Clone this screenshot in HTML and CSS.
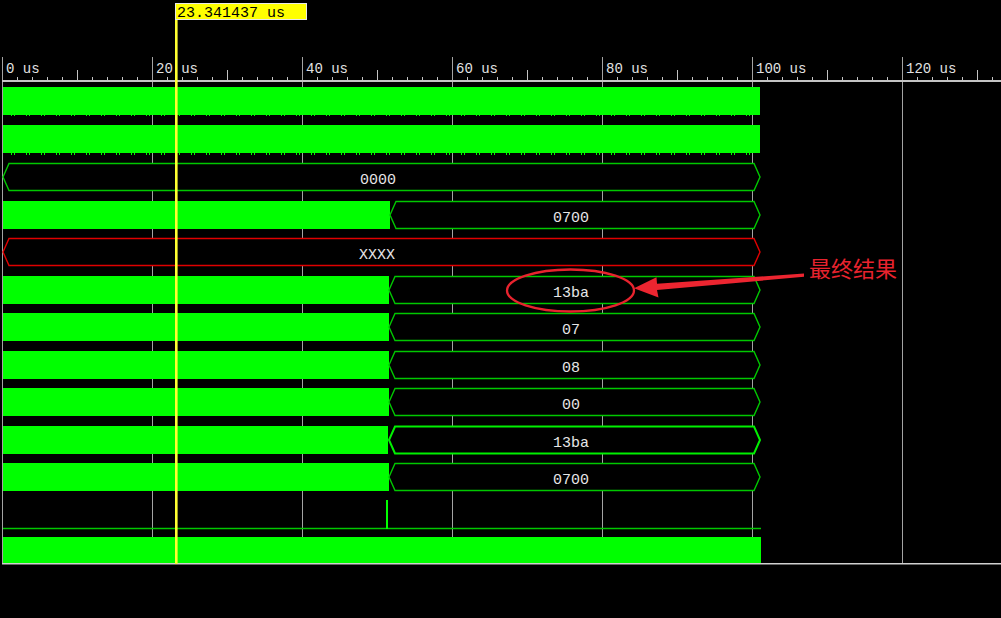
FILE: index.html
```html
<!DOCTYPE html>
<html lang="zh">
<head>
<meta charset="utf-8">
<title>Waveform</title>
<link rel="stylesheet" href="styles.css">
</head>
<body>
<div class="viewer">
<svg class="wave" width="1001" height="618" viewBox="0 0 1001 618" xmlns="http://www.w3.org/2000/svg">
  <defs>
    <pattern id="clk" x="11" y="0" width="15" height="3" patternUnits="userSpaceOnUse">
      <rect x="0" y="0" width="1" height="2" class="fill-green"/>
      <rect x="3" y="0" width="1" height="2" class="fill-green"/>
    </pattern>
  </defs>

  <!-- grid -->
  <g class="grid">
    <path d="M2.5 57V564 M152.5 57V564 M302.5 57V564 M452.5 57V564 M602.5 57V564 M752.5 57V564 M902.5 57V564"/>
  </g>

  <!-- ruler -->
  <rect class="ruler-base" x="2" y="80" width="999" height="2"/>
  <path class="tick" d="M17.5 77V81M32.5 77V81M47.5 77V81M62.5 77V81M92.5 77V81M107.5 77V81M122.5 77V81M137.5 77V81M167.5 77V81M182.5 77V81M197.5 77V81M212.5 77V81M242.5 77V81M257.5 77V81M272.5 77V81M287.5 77V81M317.5 77V81M332.5 77V81M347.5 77V81M362.5 77V81M392.5 77V81M407.5 77V81M422.5 77V81M437.5 77V81M467.5 77V81M482.5 77V81M497.5 77V81M512.5 77V81M542.5 77V81M557.5 77V81M572.5 77V81M587.5 77V81M617.5 77V81M632.5 77V81M647.5 77V81M662.5 77V81M692.5 77V81M707.5 77V81M722.5 77V81M737.5 77V81M767.5 77V81M782.5 77V81M797.5 77V81M812.5 77V81M842.5 77V81M857.5 77V81M872.5 77V81M887.5 77V81M917.5 77V81M932.5 77V81M947.5 77V81M962.5 77V81M992.5 77V81 M77.5 70V81M227.5 70V81M377.5 70V81M527.5 70V81M677.5 70V81M827.5 70V81M977.5 70V81"/>
  <g class="ruler-label">
    <text x="6" y="73">0 us</text>
    <text x="156" y="73">20 us</text>
    <text x="306" y="73">40 us</text>
    <text x="456" y="73">60 us</text>
    <text x="606" y="73">80 us</text>
    <text x="756" y="73">100 us</text>
    <text x="906" y="73">120 us</text>
  </g>

  <!-- row 1, 2: clocks -->
  <rect class="fill-green" x="3" y="87" width="757" height="28"/>
  <rect fill="url(#clk)" x="3" y="115" width="755" height="2"/>
  <rect class="fill-green" x="3" y="125" width="757" height="28"/>
  <rect fill="url(#clk)" x="3" y="153" width="755" height="2"/>

  <!-- row 3: 0000 -->
  <polygon class="bus" points="3,177 9,163.5 754,163.5 760,177 754,190.5 9,190.5"/>
  <text class="val" x="378" y="184">0000</text>

  <!-- row 4: 0700 -->
  <rect class="fill-green" x="3" y="201" width="387" height="28"/>
  <polygon class="bus" points="390,215 396,201.5 754,201.5 760,215 754,228.5 396,228.5"/>
  <text class="val" x="571" y="222">0700</text>

  <!-- row 5: XXXX -->
  <polygon class="bus red" points="3,252 9,238.5 754,238.5 760,252 754,265.5 9,265.5"/>
  <text class="val" x="377" y="259">XXXX</text>

  <!-- row 6: 13ba -->
  <rect class="fill-green" x="3" y="276" width="386" height="28"/>
  <polygon class="bus" points="389,290 395,276.5 754,276.5 760,290 754,303.5 395,303.5"/>
  <text class="val" x="571" y="297">13ba</text>

  <!-- row 7: 07 -->
  <rect class="fill-green" x="3" y="313" width="386" height="28"/>
  <polygon class="bus" points="389,327 395,313.5 754,313.5 760,327 754,340.5 395,340.5"/>
  <text class="val" x="571" y="334">07</text>

  <!-- row 8: 08 -->
  <rect class="fill-green" x="3" y="351" width="386" height="28"/>
  <polygon class="bus" points="389,365 395,351.5 754,351.5 760,365 754,378.5 395,378.5"/>
  <text class="val" x="571" y="372">08</text>

  <!-- row 9: 00 -->
  <rect class="fill-green" x="3" y="388" width="386" height="28"/>
  <polygon class="bus" points="389,402 395,388.5 754,388.5 760,402 754,415.5 395,415.5"/>
  <text class="val" x="571" y="409">00</text>

  <!-- row 10: 13ba (bold) -->
  <rect class="fill-green" x="3" y="426" width="385" height="28"/>
  <polygon class="bus bold" points="389,440 395,426.5 754,426.5 760,440 754,453.5 395,453.5"/>
  <text class="val" x="571" y="447">13ba</text>

  <!-- row 11: 0700 -->
  <rect class="fill-green" x="3" y="463" width="386" height="28"/>
  <polygon class="bus" points="389,477 395,463.5 754,463.5 760,477 754,490.5 395,490.5"/>
  <text class="val" x="571" y="484">0700</text>

  <!-- row 12: single bit -->
  <path class="bit" d="M3 528.5H761"/>
  <rect class="fill-green" x="386" y="500" width="2" height="29"/>

  <!-- row 13 -->
  <rect class="fill-green" x="3" y="537" width="758" height="26"/>

  <!-- bottom line -->
  <rect class="bottom-line" x="2" y="563" width="999" height="1.5"/>

  <!-- cursor -->
  <rect class="cursor" x="175" y="4" width="2.6" height="560"/>
  <rect class="cursor-box" x="175.5" y="3.5" width="131" height="16"/>
  <text class="cursor-text" x="177" y="17">23.341437 us</text>

  <!-- annotation -->
  <ellipse class="mark" cx="570.5" cy="290.5" rx="63.5" ry="21"/>
  <polygon class="arrow" points="804,273.5 804,276.8 657,290 658.5,297.5 634,288.3 656.5,277.2 657,283.8"/>
  <text class="note" x="809" y="277">最终结果</text>
</svg>
</div>
</body>
</html>
```

FILE: styles.css
```css
html, body {
  margin: 0;
  padding: 0;
  background: #000;
}

.viewer {
  width: 1001px;
  height: 618px;
  overflow: hidden;
  background: #000;
}

.wave {
  display: block;
}

.grid path {
  stroke: #a4a4a4;
  stroke-width: 1;
  fill: none;
}

.ruler-base {
  fill: #c4c4c4;
}

.tick {
  stroke: #c4c4c4;
  stroke-width: 1;
  fill: none;
}

.ruler-label text {
  font-family: "Liberation Mono", "DejaVu Sans Mono", monospace;
  font-size: 14px;
  fill: #e2e2e2;
}

.fill-green {
  fill: #00ff00;
}

.bus {
  fill: #000;
  stroke: #00c800;
  stroke-width: 1.4;
}

.bus.red {
  stroke: #e00000;
}

.bus.bold {
  stroke: #00f000;
  stroke-width: 2;
}

.val {
  font-family: "Liberation Mono", "DejaVu Sans Mono", monospace;
  font-size: 15px;
  fill: #e6e6e6;
  text-anchor: middle;
}

.bit {
  stroke: #00c800;
  stroke-width: 1.5;
  fill: none;
}

.bottom-line {
  fill: #d0d0d0;
}

.cursor {
  fill: #ffff30;
}

.cursor-box {
  fill: #ffff00;
  stroke: #e8e8e8;
  stroke-width: 1;
}

.cursor-text {
  font-family: "Liberation Mono", "DejaVu Sans Mono", monospace;
  font-size: 15px;
  fill: #000;
}

.mark {
  fill: none;
  stroke: #e8232e;
  stroke-width: 2.3;
}

.arrow {
  fill: #ec2530;
}

.note {
  font-family: "Noto Sans CJK SC", "Noto Sans", sans-serif;
  font-size: 22px;
  fill: #e8232e;
}
```
